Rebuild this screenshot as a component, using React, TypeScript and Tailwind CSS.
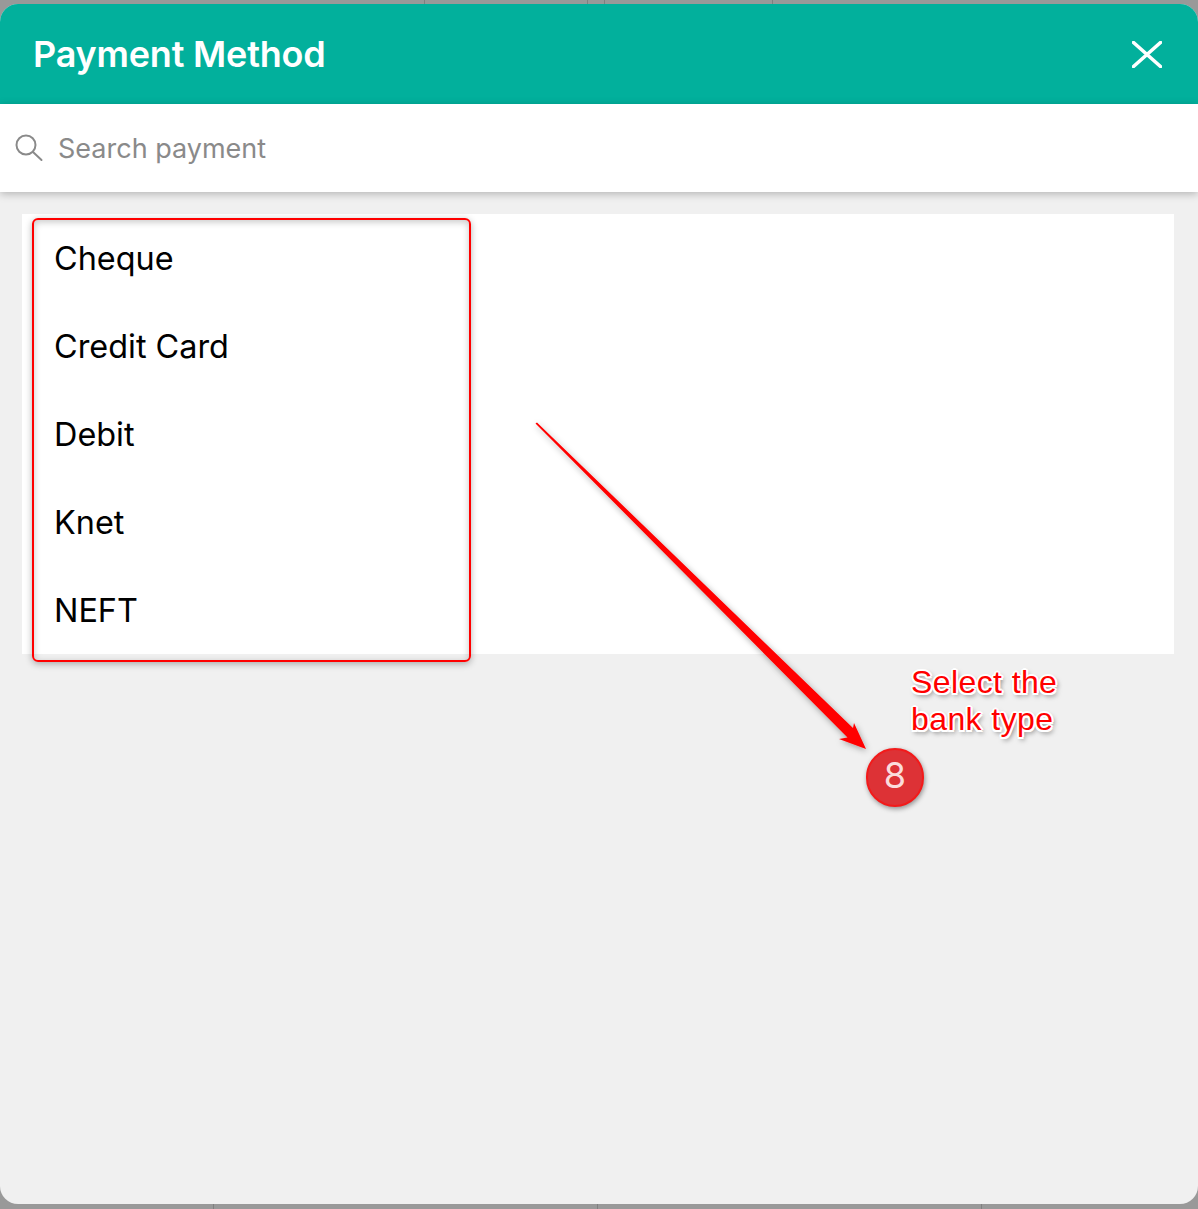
import React from 'react';

const METHODS = ['Cheque', 'Credit Card', 'Debit', 'Knet', 'NEFT'];

// hairlines of the page behind the sheet
const TOP_TICKS = ['left-[424px]', 'left-[587px]', 'left-[604px]', 'left-[772px]'];
const BOTTOM_TICKS = ['left-[213px]', 'left-[597px]', 'left-[981px]'];

const App: React.FC = () => {
  return (
    <div className="relative flex h-[1209px] w-[1198px] flex-col overflow-hidden bg-[#999999] pt-1 pb-[5px] font-['Inter','Liberation_Sans',sans-serif]">
      {TOP_TICKS.map((pos) => (
        <div key={pos} className={`absolute top-0 h-1 w-px bg-[#808080] ${pos}`} />
      ))}
      {BOTTOM_TICKS.map((pos) => (
        <div key={pos} className={`absolute bottom-0 h-[5px] w-px bg-[#808080] ${pos}`} />
      ))}

      <div className="flex min-h-0 flex-1 flex-col overflow-hidden rounded-[18px] bg-[#f0f0f0]">
        {/* header */}
        <div className="flex h-[100px] shrink-0 items-center justify-between bg-[#02b09c] pr-[36px] pl-[33px]">
          <h1 className="text-[36px] font-semibold tracking-[-0.2px] text-white">Payment Method</h1>
          <svg className="h-[27px] w-[30px] text-white" viewBox="0 0 30 27" fill="none" stroke="currentColor" strokeWidth={3.6} strokeLinecap="round">
            <path d="M1.5 1.5 L28.5 25.5 M28.5 1.5 L1.5 25.5" />
          </svg>
        </div>

        {/* search */}
        <div className="relative flex h-[88px] shrink-0 items-center gap-[15px] bg-white pl-[15px] shadow-[0_2px_8px_rgba(0,0,0,0.25)]">
          <svg className="h-[28px] w-[28px] text-[#8a8a8a]" viewBox="0 0 28 28" fill="none" stroke="currentColor" strokeWidth={2} strokeLinecap="round">
            <circle cx="11" cy="11" r="9.5" />
            <path d="M18 18 L26.5 26" />
          </svg>
          <span className="relative top-px text-[27px] text-[#8a8a8a]">Search payment</span>
        </div>

        {/* list */}
        <div className="mt-[22px] mr-[24px] ml-[22px] bg-white">
          {METHODS.map((method) => (
            <div key={method} className="flex h-[88px] items-center pt-[2px] pl-[32px] text-[32.4px] text-black">
              {method}
            </div>
          ))}
        </div>
      </div>

      {/* annotation: red outline round the list */}
      <div className="absolute top-[218px] left-[32px] h-[444px] w-[439px] rounded-[6px] border-2 border-[#ff0000] shadow-[0_2px_7px_rgba(0,0,0,0.3),inset_0_2px_7px_rgba(0,0,0,0.22)]" />

      {/* annotation: arrow */}
      <svg className="absolute top-0 left-0 h-[1209px] w-[1198px]" viewBox="0 0 1198 1209" fill="none">
        <defs>
          <filter id="arrowShadow" x="-10%" y="-10%" width="120%" height="120%">
            <feDropShadow dx="1" dy="2" stdDeviation="3" floodColor="#000000" floodOpacity="0.35" />
          </filter>
        </defs>
        <path
          d="M535.5 423.5 L537 422.5 L853 728 L854 723 L866 749 L839 739 L847.5 737.5 Z"
          fill="#ff0000"
          filter="url(#arrowShadow)"
        />
      </svg>

      {/* annotation: caption */}
      <div className="absolute top-[664px] left-[911px] font-['Liberation_Sans',sans-serif] text-[32px] leading-[37px] tracking-[0.4px] text-[#ff0000] [text-shadow:-1.5px_-1.5px_0_#fff,1.5px_-1.5px_0_#fff,-1.5px_1.5px_0_#fff,1.5px_1.5px_0_#fff,0_-2px_0_#fff,0_2px_0_#fff,-2px_0_0_#fff,2px_0_0_#fff,2px_3px_5px_rgba(0,0,0,0.6)]">
        <div>Select the</div>
        <div>bank type</div>
      </div>

      {/* annotation: step badge */}
      <div className="absolute top-[748px] left-[866px] flex h-[59px] w-[58px] items-center justify-center rounded-full border-2 border-[#f31a1a] bg-[#dd3236] pb-[5px] text-[36px] text-[#fbdcdc] shadow-[1px_2px_5px_rgba(0,0,0,0.4)]">
        8
      </div>
    </div>
  );
};

export default App;
